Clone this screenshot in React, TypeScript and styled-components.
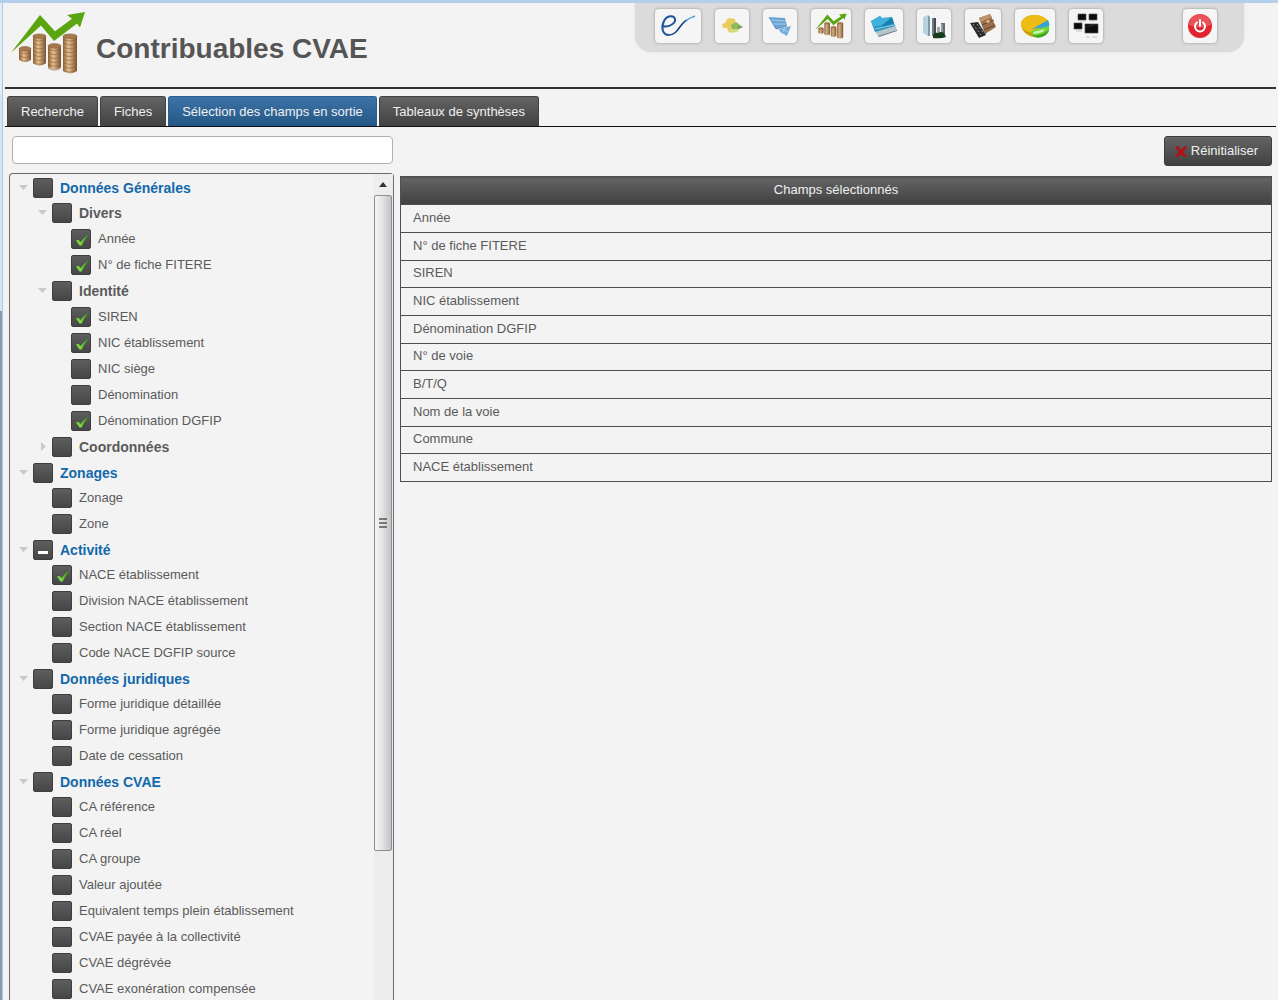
import React, { useState } from "react";
import styled, { createGlobalStyle, css } from "styled-components";

const darkGradient = "linear-gradient(#646464, #414141)";
const fontStack = '"Liberation Sans", Arial, sans-serif';

const GlobalStyle = createGlobalStyle`
  *, *::before, *::after { box-sizing: border-box; }
  body {
    margin: 0;
    background: #f3f3f3;
    color: #5a5a5a;
    font: 13px/16px ${fontStack};
  }
  button, input { font: inherit; }
`;

const Shell = styled.div`
  display: flex;
  height: 100vh;
  border-top: 3px solid #b4cfea;
  overflow: hidden;
`;

const WindowEdge = styled.div`
  flex: none;
  width: 3px;
  border-right: 1px solid #a9cbe6;
  background: linear-gradient(#e3edf8 0 92px, #d5e4f2 92px 308px, #8b9bb0 308px);
`;

const Page = styled.div`
  flex: 1;
  min-width: 0;
  display: flex;
  flex-direction: column;
  padding: 0 2px;
`;

const Header = styled.header`
  flex: none;
  display: flex;
  align-items: flex-start;
  height: 86px;
  padding: 0 32px 0 6px;
  border-bottom: 2px solid #303334;
`;

const Brand = styled.div`
  display: flex;
  padding-top: 8px;
  gap: 10px;
`;

const Title = styled.h1`
  margin: 0;
  padding-top: 21px;
  font-size: 28px;
  line-height: 34px;
  font-weight: bold;
  color: #555;
`;

const Toolbar = styled.nav`
  display: flex;
  gap: 14px;
  margin-left: auto;
  padding: 6px 27px 9px 20px;
  border-radius: 0 0 16px 16px;
  background: #dbdbdb;
  box-shadow: 0 0 3px #dedede;
`;

const ToolButton = styled.button<{ $width?: number; $apart?: boolean }>`
  display: flex;
  align-items: center;
  justify-content: center;
  width: ${(p) => p.$width ?? 34}px;
  height: 34px;
  margin-left: ${(p) => (p.$apart ? 66 : 0)}px;
  padding: 0;
  border: 0;
  border-radius: 4px;
  background: #f5f5f5;
  box-shadow: 0 0 3px #8f8f8f;
  cursor: pointer;
`;

const Tabs = styled.div`
  flex: none;
  display: flex;
  gap: 2px;
  margin-top: 7px;
  padding: 0 2px;
  border-bottom: 1px solid #111;
`;

const Tab = styled.button<{ $active?: boolean }>`
  height: 30px;
  padding: 0 13px;
  border: 1px solid ${(p) => (p.$active ? "#2a5e91" : "#414141")};
  border-bottom: 0;
  border-radius: 3px 3px 0 0;
  background: ${(p) => (p.$active ? "linear-gradient(#3d73a6, #235785)" : darkGradient)};
  color: #f0f0f0;
  white-space: nowrap;
  cursor: pointer;
`;

const Workspace = styled.main`
  flex: 1;
  min-height: 0;
  display: flex;
  gap: 6px;
  padding: 9px 4px 0 4px;
`;

const Picker = styled.section`
  flex: none;
  width: 385px;
  display: flex;
  flex-direction: column;
  gap: 9px;
`;

const SearchInput = styled.input`
  flex: none;
  height: 28px;
  margin: 0 1px 0 3px;
  padding: 0 8px;
  border: 1px solid #b0b0b0;
  border-radius: 4px;
  background: #fff;
  color: #444;
`;

const TreePanel = styled.div`
  flex: 1;
  min-height: 0;
  display: flex;
  border: 1px solid #6c6c6c;
  border-bottom: 0;
  border-radius: 4px 4px 0 0;
`;

const TreeScroll = styled.div`
  flex: 1;
  padding: 1px 0 0 9px;
  overflow-y: auto;
  scrollbar-width: none;
`;

const List = styled.ul<{ $nested?: boolean }>`
  list-style: none;
  margin: 0;
  padding: 0 0 0 ${(p) => (p.$nested ? 19 : 0)}px;
`;

const Row = styled.div<{ $root?: boolean }>`
  display: flex;
  align-items: center;
  height: ${(p) => (p.$root ? 25 : 26)}px;
`;

const Toggle = styled.button`
  flex: none;
  display: flex;
  width: 14px;
  height: 10px;
  padding: 0;
  border: 0;
  background: none;
  cursor: pointer;
`;

const ToggleSpace = styled.span`
  flex: none;
  width: 14px;
`;

const CheckLabel = styled.label<{ $kind: "root" | "group" | "leaf" }>`
  display: flex;
  align-items: center;
  gap: 7px;
  white-space: nowrap;
  cursor: pointer;
  ${(p) =>
    p.$kind !== "leaf" &&
    css`
      font-size: 14px;
      font-weight: bold;
    `}
  ${(p) =>
    p.$kind === "root" &&
    css`
      color: #1268ab;
    `}
`;

const CheckFrame = styled.span`
  display: grid;
  place-items: center;
  & > * {
    grid-area: 1 / 1;
  }
  & > svg {
    pointer-events: none;
  }
`;

const CheckInput = styled.input`
  appearance: none;
  width: 20px;
  height: 20px;
  margin: 0;
  border: 1px solid #3e3e3e;
  border-radius: 2px;
  background: linear-gradient(#5e5e5e, #464646);
  cursor: pointer;
`;

const ScrollColumn = styled.div`
  flex: none;
  width: 19px;
  display: flex;
  flex-direction: column;
  padding-right: 1px;
  background: #ededed;
`;

const ScrollArrow = styled.button`
  flex: none;
  display: flex;
  align-items: center;
  justify-content: center;
  height: 21px;
  padding: 0;
  border: 0;
  background: none;
`;

const ScrollThumb = styled.div`
  flex: 22;
  display: flex;
  align-items: center;
  justify-content: center;
  border: 1px solid #8e8e8e;
  border-radius: 2px;
  background: linear-gradient(90deg, #f6f6f6, #e4e4e6 45%, #c2c2c8);
`;

const ScrollRest = styled.div`
  flex: 5;
`;

const Results = styled.section`
  flex: 1;
  min-width: 0;
  display: flex;
  flex-direction: column;
  align-items: flex-end;
  gap: 10px;
`;

const ResetButton = styled.button`
  display: flex;
  align-items: center;
  gap: 4px;
  height: 30px;
  padding: 0 13px 0 10px;
  border: 1px solid #3c3c3c;
  border-radius: 3px;
  background: ${darkGradient};
  color: #f0f0f0;
  cursor: pointer;
`;

const FieldTable = styled.table`
  width: 100%;
  border-collapse: collapse;
  border: 1px solid #505050;
`;

const FieldHead = styled.th`
  height: 28px;
  padding: 0 0 1px;
  background: ${darkGradient};
  color: #f0f0f0;
  font-weight: normal;
  text-align: center;
`;

const FieldRow = styled.tr`
  height: 28px;
  &:nth-child(3n) {
    height: 27px;
  }
`;

const FieldCell = styled.td`
  padding: 0 12px 2px;
  border: 1px solid #505050;
`;

const GrowthIcon = ({ width, height }: { width: number; height: number }) => {
  const stacks = [
    { x: 8, top: 39, bottom: 52, w: 12 },
    { x: 22, top: 26, bottom: 56, w: 13 },
    { x: 37, top: 36, bottom: 60, w: 13 },
    { x: 52, top: 26, bottom: 64, w: 14 },
  ];
  return (
    <svg width={width} height={height} viewBox="0 0 75 66" preserveAspectRatio="none" aria-hidden="true">
      <defs>
        <linearGradient id="coin" x1="0" x2="1" y1="0" y2="0">
          <stop offset="0" stopColor="#8f6037" />
          <stop offset=".4" stopColor="#e6c08f" />
          <stop offset="1" stopColor="#7d512d" />
        </linearGradient>
      </defs>
      {stacks.map((s) => (
        <g key={s.x}>
          <path
            d={`M${s.x} ${s.top}V${s.bottom - 2}q${s.w / 2} 5 ${s.w} 0V${s.top}z`}
            fill="url(#coin)"
          />
          {Array.from({ length: Math.floor((s.bottom - s.top) / 4) }, (_, i) => (
            <path
              key={i}
              d={`M${s.x} ${s.top + 3 + i * 4}q${s.w / 2} 4 ${s.w} 0`}
              fill="none"
              stroke="#825a35"
              strokeWidth="1"
              opacity=".55"
            />
          ))}
          <ellipse cx={s.x + s.w / 2} cy={s.top} rx={s.w / 2} ry="2.4" fill="#a5794b" stroke="#8b643f" strokeWidth=".6" />
        </g>
      ))}
      <path d="M0 43L29 4L44 21L61 8L56 4L74 1L69 17L66 13L43 31L30 15z" fill="#5ba510" />
    </svg>
  );
};

const SignatureIcon = () => (
  <svg width="36" height="24" viewBox="0 0 36 24" fill="none" aria-hidden="true">
    <path d="M2 12C9 14 16 9 15 5C14 1 7 1 4 7C1 13 2 21 9 21" stroke="#1f559a" strokeWidth="2" />
    <path d="M9 21C18 21 20 9 27 6" stroke="#17457d" strokeWidth="1.6" />
    <path d="M26 7C29 4 31 4 35 2" stroke="#4ba3dc" strokeWidth="1.4" />
  </svg>
);

const RegionIcon = () => (
  <svg width="24" height="20" viewBox="0 0 24 20" aria-hidden="true">
    <path d="M2 8L5 7L7 3L10 2L15 3L16 8L14 14L9 17L7 12L3 12z" fill="#e8cc62" />
    <path d="M11 9L16 6L20 9L23 11L17 14L12 13z" fill="#8dba5a" />
    <path d="M9 14L17 13L19 15L12 17z" fill="#cfdd78" />
    <path d="M18 10l5 1-5 2z" fill="#7d9464" />
  </svg>
);

const ParcelIcon = () => (
  <svg width="24" height="22" viewBox="0 0 24 22" aria-hidden="true">
    <path d="M1 2L17 3L19 11L8 14z" fill="#69a3d5" />
    <path d="M11 14L23 11L19 21L12 17z" fill="#75abd8" />
    <path d="M3 5L17 6M5 9L18 9M14 14L20 17M18 12l-3 5" stroke="#b9d6ee" strokeWidth=".8" />
    <path d="M1 2L8 14M19 11L8 14" stroke="#4d84b7" strokeWidth=".8" />
  </svg>
);

const FolderIcon = () => (
  <svg width="28" height="24" viewBox="0 0 28 24" aria-hidden="true">
    <path d="M4 16L25 11L27 16L8 22z" fill="#b4c5ce" />
    <path d="M1 7L10 2L12 4L22 3L25 12L5 18z" fill="#2793c4" />
    <path d="M1 7L10 2L12 4L20 4L13 11L3 13z" fill="#3fb1da" />
    <path d="M12 11L22 4L24 9L13 13z" fill="#1d7fae" />
    <path d="M5 15L24 11" stroke="#95d0e5" strokeWidth="1" />
    <path d="M8 22L27 16L27 17L9 23z" fill="#667b87" />
  </svg>
);

const BuildingsIcon = () => (
  <svg width="26" height="26" viewBox="0 0 26 26" aria-hidden="true">
    <path d="M2 4L7 2V23L2 20z" fill="#b9d2e0" />
    <path d="M7 2L9 4V23H7z" fill="#7e99a9" />
    <path d="M11 5H15V23H11z" fill="#424d55" />
    <path d="M12 5V23" stroke="#9eabb2" />
    <path d="M16 14H19V23H16z" fill="#a0a8aa" />
    <path d="M20 10H24V24H20z" fill="#626d72" />
    <path d="M21 11V22" stroke="#b8c2c6" />
    <path d="M12 23q1-4 5-3q3-2 6 0l2 4q-5 2-13 1z" fill="#173d1a" />
  </svg>
);

const WalletIcon = () => (
  <svg width="28" height="26" viewBox="0 0 28 26" aria-hidden="true">
    <path d="M10 5L21 1L27 14L16 21z" fill="#9b6f4b" />
    <path d="M10 5L21 1L23 4L12 9z" fill="#bc946b" />
    <path d="M13 12L25 7M15 17L26 12" stroke="#684328" />
    <path d="M17 8l3-1 1 2-3 1z" fill="#e2c49b" />
    <path d="M1 10L9 9L17 22L10 25z" fill="#28292c" />
    <path d="M4 11L12 22M8 11L15 21" stroke="#a1a1a1" strokeWidth="1" strokeDasharray="2 2" />
  </svg>
);

const PieIcon = () => (
  <svg width="30" height="26" viewBox="0 0 30 26" aria-hidden="true">
    <path d="M1 12C1 5 8 2 15 2C22 2 28 6 28 11L29 17C25 23 20 25 14 24C7 23 2 18 1 12z" fill="#c89d08" />
    <ellipse cx="15" cy="11" rx="14" ry="9" fill="#edbd13" />
    <path d="M12 16L28 7Q30 11 29 14z" fill="#37a4d5" />
    <path d="M11 18L29 13Q30 18 25 22Q18 26 12 22z" fill="#6bd637" />
    <path d="M13 19L25 16Q24 20 14 21z" fill="#d6f3b1" />
    <path d="M12 22Q20 24 29 17Q28 22 22 24Q16 26 12 22z" fill="#3da71b" />
  </svg>
);

const ScreensIcon = () => (
  <svg width="26" height="26" viewBox="0 0 26 26" aria-hidden="true">
    <g fill="#0c0c0c" stroke="#555" strokeWidth=".7">
      <path d="M5 1h8v6H5zM16 1h8v6h-8zM1 10h8v6H1zM12 11h13v9H12z" />
    </g>
    <path d="M7 8h5M18 8h4M3 18h6M13 24h4M19 24h5" stroke="#c4c4c4" />
    <path d="M13 14l9-2" stroke="#444" strokeWidth=".6" />
  </svg>
);

const PowerIcon = () => (
  <svg width="26" height="26" viewBox="0 0 26 26" aria-hidden="true">
    <circle cx="13" cy="13" r="12" fill="#e0252c" />
    <path d="M2 12A11 11 0 0 1 24 12Q13 17 2 12z" fill="#ed6b70" opacity=".65" />
    <path d="M10 9.5A5 5 0 1 0 16 9.5M13 7V13" fill="none" stroke="#fff" strokeWidth="2" strokeLinecap="round" />
  </svg>
);

const CheckMark = () => (
  <svg width="18" height="18" viewBox="0 0 18 18" aria-hidden="true">
    <defs>
      <linearGradient id="tick" x1="0" y1="1" x2="1" y2="0">
        <stop offset="0" stopColor="#9af05a" />
        <stop offset=".45" stopColor="#5cc02c" />
        <stop offset="1" stopColor="#37901a" />
      </linearGradient>
    </defs>
    <path d="M4 10.4L6.6 9.8L8.4 12Q11.5 7.4 17 4.2Q12.6 9.4 9.6 15.4H7.6z" fill="url(#tick)" />
  </svg>
);

const DashMark = () => (
  <svg width="16" height="16" viewBox="0 0 16 16" aria-hidden="true">
    <path d="M3 9h10v3H3z" fill="#fff" />
  </svg>
);

const CrossMark = () => (
  <svg width="12" height="12" viewBox="0 0 12 12" aria-hidden="true">
    <path d="M0 2L3 1L6 5L10 1L12 2L8 7L12 11L9 12L6 9L3 12L0 11L4 7z" fill="#b50d12" />
  </svg>
);

type Node = { label: string; mixed?: boolean; children?: Node[] };

const leaves = (...labels: string[]): Node[] => labels.map((label) => ({ label }));

const TREE: Node[] = [
  {
    label: "Données Générales",
    children: [
      { label: "Divers", children: leaves("Année", "N° de fiche FITERE") },
      {
        label: "Identité",
        children: leaves("SIREN", "NIC établissement", "NIC siège", "Dénomination", "Dénomination DGFIP"),
      },
      { label: "Coordonnées", children: leaves("N° de voie", "B/T/Q", "Nom de la voie", "Commune") },
    ],
  },
  { label: "Zonages", children: leaves("Zonage", "Zone") },
  {
    label: "Activité",
    mixed: true,
    children: leaves(
      "NACE établissement",
      "Division NACE établissement",
      "Section NACE établissement",
      "Code NACE DGFIP source",
    ),
  },
  {
    label: "Données juridiques",
    children: leaves("Forme juridique détaillée", "Forme juridique agrégée", "Date de cessation"),
  },
  {
    label: "Données CVAE",
    children: leaves(
      "CA référence",
      "CA réel",
      "CA groupe",
      "Valeur ajoutée",
      "Equivalent temps plein établissement",
      "CVAE payée à la collectivité",
      "CVAE dégrévée",
      "CVAE exonération compensée",
    ),
  },
];

const INITIAL = [
  "Année",
  "N° de fiche FITERE",
  "SIREN",
  "NIC établissement",
  "Dénomination DGFIP",
  "N° de voie",
  "B/T/Q",
  "Nom de la voie",
  "Commune",
  "NACE établissement",
];

const TABS = ["Recherche", "Fiches", "Sélection des champs en sortie", "Tableaux de synthèses"];

const leafLabels = (nodes: Node[]): string[] =>
  nodes.flatMap((n) => (n.children ? leafLabels(n.children) : [n.label]));

const flip = (list: string[], item: string) =>
  list.includes(item) ? list.filter((x) => x !== item) : [...list, item];

type BranchProps = {
  nodes: Node[];
  depth: number;
  checked: string[];
  closed: string[];
  onCheck: (label: string) => void;
  onFold: (label: string) => void;
};

const Branch = ({ nodes, depth, ...state }: BranchProps) => (
  <List $nested={depth > 0}>
    {nodes.map((node) => {
      const open = !state.closed.includes(node.label);
      const isChecked = state.checked.includes(node.label);
      const mixed = !!node.mixed && leafLabels(node.children ?? []).some((l) => state.checked.includes(l));
      return (
        <li key={node.label}>
          <Row $root={depth === 0}>
            {node.children ? (
              <Toggle aria-label={`Déplier ${node.label}`} aria-expanded={open} onClick={() => state.onFold(node.label)}>
                <svg width="10" height="10" viewBox="0 0 10 10" aria-hidden="true">
                  <path d={open ? "M0 2h9L4.5 7z" : "M3 0v9L8 4.5z"} fill="#c9c9c9" />
                </svg>
              </Toggle>
            ) : (
              <ToggleSpace />
            )}
            <CheckLabel $kind={depth === 0 ? "root" : node.children ? "group" : "leaf"}>
              <CheckFrame>
                <CheckInput type="checkbox" checked={isChecked} onChange={() => state.onCheck(node.label)} />
                {isChecked ? <CheckMark /> : mixed ? <DashMark /> : null}
              </CheckFrame>
              {node.label}
            </CheckLabel>
          </Row>
          {node.children && open && <Branch nodes={node.children} depth={depth + 1} {...state} />}
        </li>
      );
    })}
  </List>
);

export default function App() {
  const [tab, setTab] = useState(TABS[2]);
  const [query, setQuery] = useState("");
  const [checked, setChecked] = useState<string[]>(INITIAL);
  const [closed, setClosed] = useState<string[]>(["Coordonnées"]);
  const selected = leafLabels(TREE).filter((label) => checked.includes(label));

  return (
    <>
      <GlobalStyle />
      <Shell>
        <WindowEdge />
        <Page>
          <Header>
            <Brand>
              <GrowthIcon width={75} height={64} />
              <Title>Contribuables CVAE</Title>
            </Brand>
            <Toolbar aria-label="Applications">
              <ToolButton $width={46} aria-label="Accueil"><SignatureIcon /></ToolButton>
              <ToolButton aria-label="Territoire"><RegionIcon /></ToolButton>
              <ToolButton aria-label="Parcelles"><ParcelIcon /></ToolButton>
              <ToolButton $width={40} aria-label="Contribuables"><GrowthIcon width={32} height={26} /></ToolButton>
              <ToolButton $width={38} aria-label="Dossiers"><FolderIcon /></ToolButton>
              <ToolButton aria-label="Locaux"><BuildingsIcon /></ToolButton>
              <ToolButton $width={36} aria-label="Finances"><WalletIcon /></ToolButton>
              <ToolButton $width={40} aria-label="Statistiques"><PieIcon /></ToolButton>
              <ToolButton aria-label="Fenêtres"><ScreensIcon /></ToolButton>
              <ToolButton $apart aria-label="Déconnexion"><PowerIcon /></ToolButton>
            </Toolbar>
          </Header>
          <Tabs role="tablist">
            {TABS.map((name) => (
              <Tab key={name} role="tab" aria-selected={name === tab} $active={name === tab} onClick={() => setTab(name)}>
                {name}
              </Tab>
            ))}
          </Tabs>
          <Workspace>
            <Picker>
              <SearchInput aria-label="Rechercher un champ" value={query} onChange={(e) => setQuery(e.target.value)} />
              <TreePanel>
                <TreeScroll>
                  <Branch
                    nodes={TREE}
                    depth={0}
                    checked={checked}
                    closed={closed}
                    onCheck={(label) => setChecked(flip(checked, label))}
                    onFold={(label) => setClosed(flip(closed, label))}
                  />
                </TreeScroll>
                <ScrollColumn>
                  <ScrollArrow aria-label="Défiler vers le haut">
                    <svg width="8" height="5" viewBox="0 0 8 5" aria-hidden="true">
                      <path d="M0 5L4 0L8 5z" fill="#333" />
                    </svg>
                  </ScrollArrow>
                  <ScrollThumb>
                    <svg width="8" height="10" viewBox="0 0 8 10" aria-hidden="true">
                      <path d="M0 1h8M0 5h8M0 9h8" stroke="#555" strokeWidth="1.6" />
                    </svg>
                  </ScrollThumb>
                  <ScrollRest />
                </ScrollColumn>
              </TreePanel>
            </Picker>
            <Results>
              <ResetButton onClick={() => setChecked([])}>
                <CrossMark />
                Réinitialiser
              </ResetButton>
              <FieldTable>
                <thead>
                  <tr>
                    <FieldHead scope="col">Champs sélectionnés</FieldHead>
                  </tr>
                </thead>
                <tbody>
                  {selected.map((label) => (
                    <FieldRow key={label}>
                      <FieldCell>{label}</FieldCell>
                    </FieldRow>
                  ))}
                </tbody>
              </FieldTable>
            </Results>
          </Workspace>
        </Page>
      </Shell>
    </>
  );
}
